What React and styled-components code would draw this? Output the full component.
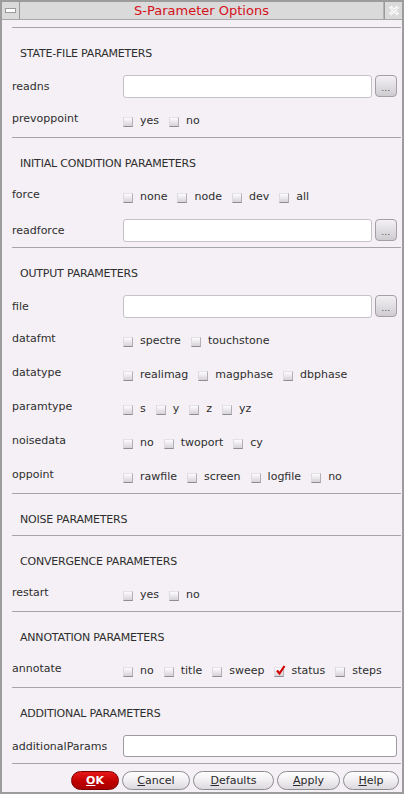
import React from "react";
import styled, { createGlobalStyle } from "styled-components";

const GlobalStyle = createGlobalStyle`
  body {
    margin: 0;
    background: #ffffff;
    font-family: "DejaVu Sans", "Liberation Sans", sans-serif;
  }
`;

const Window = styled.div`
  width: 404px;
  height: 794px;
  box-sizing: border-box;
  border: 2px solid #9c9c9c;
  background: #f4f0f5;
  display: flex;
  flex-direction: column;
`;

const TitleBar = styled.div`
  height: 17px;
  display: flex;
  background: #dadada;
  border-bottom: 1px solid #a8a8a8;
`;

const TitleBox = styled.div`
  width: 17px;
  flex: none;
  display: flex;
  align-items: center;
  justify-content: center;
  border-right: ${p => (p.left ? "1px solid #9a9a9a" : "none")};
  border-left: ${p => (p.left ? "none" : "1px solid #9a9a9a")};
`;

const MinBar = styled.div`
  width: 9px;
  height: 3px;
  background: #ffffff;
  border: 1px solid #9a9a9a;
`;

const Title = styled.div`
  flex: 1;
  text-align: center;
  color: #d6101a;
  font-size: 13px;
  line-height: 17px;
  border-right: 1px solid #b4b4b4;
`;

const Body = styled.div`
  flex: 1;
  padding: 7px 1px 0 10px;
`;

const Section = styled.section`
  border-top: 1px solid #a6a6a6;
`;

const SectionHead = styled.div`
  height: 41px;
  box-sizing: border-box;
  padding: 19px 0 0 8px;
  font-size: 11px;
  line-height: 14px;
  letter-spacing: -0.2px;
  color: #2e2e2e;
`;

const Row = styled.div`
  height: 34px;
  display: grid;
  grid-template-columns: 111px 1fr;
  align-items: center;
`;

const Label = styled.div`
  font-size: 11px;
  line-height: 14px;
  color: #2e2e2e;
  padding-bottom: ${p => (p.tight ? 3 : 0)}px;
  padding-top: ${p => (p.tight ? 0 : 2)}px;
`;

const Controls = styled.div`
  display: flex;
  align-items: center;
  gap: 3px;
  margin-right: 4px;
`;

const Field = styled.div`
  flex: 1;
  height: ${p => p.h}px;
  box-sizing: border-box;
  background: #ffffff;
  border: 1px solid ${p => p.edge};
  border-radius: 3px;
`;

const Browse = styled.div`
  width: 22px;
  height: 22px;
  box-sizing: border-box;
  border: 1px solid #a2a0a4;
  border-radius: 4px;
  background: linear-gradient(#f2f0f3, #cfccd1);
  font-size: 8px;
  color: #444;
  text-align: center;
  line-height: 26px;
  letter-spacing: 0.5px;
`;

const Options = styled.div`
  display: flex;
  align-items: center;
  gap: 10px;
  padding-top: 2px;
`;

const Option = styled.span`
  display: flex;
  align-items: center;
  gap: 7px;
  font-size: 11px;
  line-height: 14px;
  color: #2e2e2e;
`;

const Box = styled.span`
  position: relative;
  width: 10px;
  height: 10px;
  box-sizing: border-box;
  margin-top: 2px;
  border-top: 1px solid #e4e2e6;
  border-left: 1px solid #dcdadf;
  border-right: 1px solid #b2b0b4;
  border-bottom: 1px solid #8e8c90;
  background: linear-gradient(#fdfcfd, #d6d2d9);
`;

const Tick = styled.svg`
  position: absolute;
  left: 0;
  top: -3px;
  width: 11px;
  height: 11px;
  overflow: visible;
`;

const ButtonBar = styled.div`
  height: 28px;
  display: flex;
  justify-content: flex-end;
  align-items: flex-start;
  gap: 3px;
  padding: 7px 3px 0 0;
  box-sizing: border-box;
`;

const Button = styled.div`
  width: ${p => p.w}px;
  height: 19px;
  box-sizing: border-box;
  border-radius: 10px;
  border: 1px solid ${p => (p.primary ? "#7a0000" : "#8e8c90")};
  background: ${p =>
    p.primary
      ? "linear-gradient(#e81818, #c00000 55%, #a80000)"
      : "linear-gradient(#ffffff, #f0eef1 50%, #dcd9de)"};
  color: ${p => (p.primary ? "#ffffff" : "#2a2a2a")};
  font-weight: ${p => (p.primary ? "bold" : "normal")};
  font-size: 11px;
  line-height: 17px;
  text-align: center;
`;

const sections = [
  {
    title: "STATE-FILE PARAMETERS",
    rows: [
      { label: "readns", field: true },
      { label: "prevoppoint", opts: ["yes", "no"] },
    ],
  },
  {
    title: "INITIAL CONDITION PARAMETERS",
    rows: [
      { label: "force", opts: ["none", "node", "dev", "all"] },
      { label: "readforce", field: true },
    ],
  },
  {
    title: "OUTPUT PARAMETERS",
    rows: [
      { label: "file", field: true },
      { label: "datafmt", opts: ["spectre", "touchstone"] },
      { label: "datatype", opts: ["realimag", "magphase", "dbphase"] },
      { label: "paramtype", opts: ["s", "y", "z", "yz"] },
      { label: "noisedata", opts: ["no", "twoport", "cy"] },
      { label: "oppoint", opts: ["rawfile", "screen", "logfile", "no"] },
    ],
  },
  { title: "NOISE PARAMETERS", rows: [] },
  {
    title: "CONVERGENCE PARAMETERS",
    rows: [{ label: "restart", opts: ["yes", "no"] }],
  },
  {
    title: "ANNOTATION PARAMETERS",
    rows: [
      {
        label: "annotate",
        opts: ["no", "title", "sweep", "status", "steps"],
        checked: "status",
      },
    ],
  },
  {
    title: "ADDITIONAL PARAMETERS",
    rows: [{ label: "additionalParams", plain: true }],
  },
];

function CheckBox({ on }) {
  return (
    <Box>
      {on && (
        <Tick viewBox="0 0 11 11">
          <path d="M2 5.5 L4.5 8.5 L9.5 1" fill="none" stroke="#d40000" strokeWidth="2.2" />
        </Tick>
      )}
    </Box>
  );
}

function Control({ row }) {
  if (row.field) {
    return (
      <Controls>
        <Field h={23} edge="#c4c2c6" />
        <Browse>...</Browse>
      </Controls>
    );
  }
  if (row.plain) {
    return (
      <Controls>
        <Field h={22} edge="#9e9ca0" />
      </Controls>
    );
  }
  return (
    <Options>
      {row.opts.map(o => (
        <Option key={o}>
          <CheckBox on={row.checked === o} />
          {o}
        </Option>
      ))}
    </Options>
  );
}

export default function App() {
  return (
    <>
      <GlobalStyle />
      <Window>
        <TitleBar>
          <TitleBox left>
            <MinBar />
          </TitleBox>
          <Title>S-Parameter Options</Title>
          <TitleBox>
            <svg width="12" height="11" viewBox="0 0 12 11">
              <path d="M2 1.5 L10 9.5 M10 1.5 L2 9.5" stroke="#ffffff" strokeWidth="3" />
              <path d="M2 1.5 L10 9.5 M10 1.5 L2 9.5" stroke="#b8b8b8" strokeWidth="1" strokeDasharray="1 1" />
            </svg>
          </TitleBox>
        </TitleBar>
        <Body>
          {sections.map(s => (
            <Section key={s.title}>
              <SectionHead>{s.title}</SectionHead>
              {s.rows.map(r => (
                <Row key={r.label}>
                  <Label tight={!!r.opts}>{r.label}</Label>
                  <Control row={r} />
                </Row>
              ))}
            </Section>
          ))}
          <Section />
        </Body>
        <ButtonBar>
          <Button primary w={48}>
            <u>O</u>K
          </Button>
          <Button w={68}>
            <u>C</u>ancel
          </Button>
          <Button w={81}>
            <u>D</u>efaults
          </Button>
          <Button w={63}>
            <u>A</u>pply
          </Button>
          <Button w={56}>
            <u>H</u>elp
          </Button>
        </ButtonBar>
      </Window>
    </>
  );
}
